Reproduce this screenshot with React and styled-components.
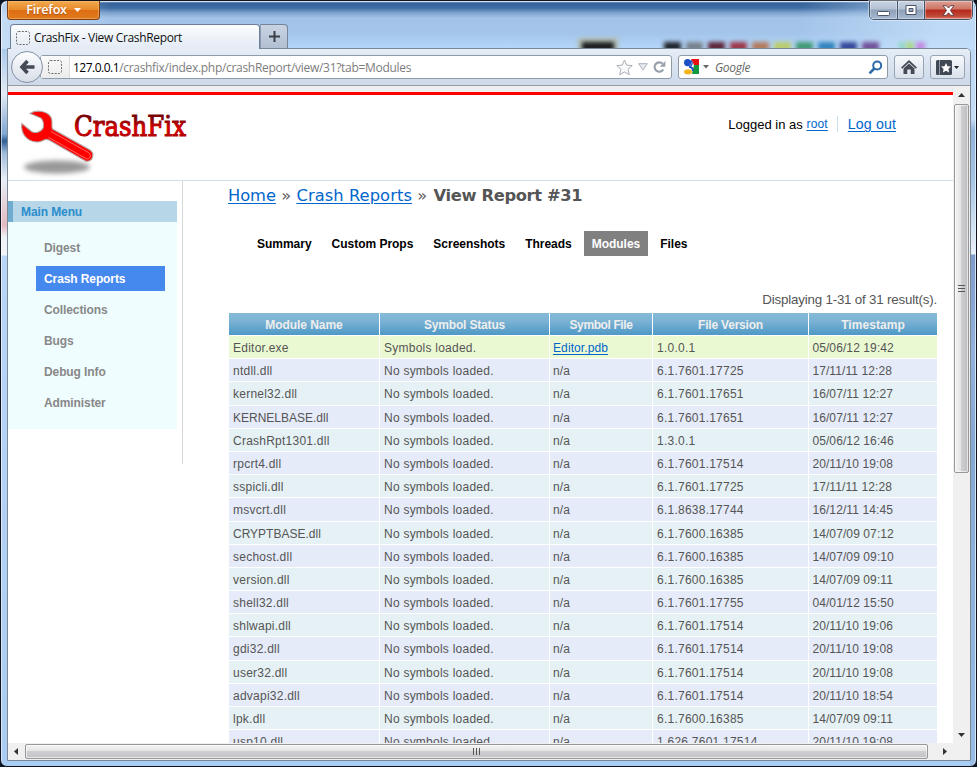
import React from "react";
import styled, { createGlobalStyle, css } from "styled-components";

const ui = `"Open Sans", "Noto Sans", sans-serif`;
const arial = `"Liberation Sans", Arial, sans-serif`;
const verdana = `"DejaVu Sans", Verdana, sans-serif`;

const GlobalStyle = createGlobalStyle`
  * { box-sizing: border-box; }
  html, body { margin: 0; padding: 0; overflow: hidden; background: #0b1424; }
  body { font-family: ${arial}; color: #555; }
  svg { display: block; flex: none; overflow: visible; }
`;

const Frame = styled.div`
  width: 977px;
  height: 767px;
  display: flex;
  flex-direction: column;
  padding: 0 5px 5px 6px;
  border: 1px solid #10141f;
  border-radius: 7px;
  box-shadow: inset 1px 1px 0 rgba(255, 255, 255, 0.55), inset -1px 0 0 rgba(225, 245, 255, 0.8);
  background:
    linear-gradient(#a9c9ea, #e4ebf4 45px, #7fa7d3 85px, #2f5f93 92px, #9fbbdb 104px, #e8eef6 130px, #e3b9c0 176px, #eef1f7 188px, #f1f3f8 206px, #b9d6f8 207px, #a9cbf1 100%) 0 48px / 7px 100% no-repeat,
    linear-gradient(#bcd8f5, #c6dcf5 70px, #91b2d9 82px, #a7c4e4 130px, #e6eef7 200px, #edf2f8 205px, #7e9bca 206px, #93b1dc 300px, #86a9d4 400px, #9cc0e8 100%) 100% 48px / 6px 100% no-repeat,
    linear-gradient(90deg, rgba(200, 222, 245, 0.9), rgba(190, 215, 243, 0) 110px, rgba(0, 0, 0, 0) 800px, rgba(200, 225, 250, 0.75) 940px) 0 0 / 100% 48px no-repeat,
    linear-gradient(#cfe0f2 0, #34629a 2px, #3f6ca3 7px, #7fa4cf 12px, #a3c3e7 17px, #a4c5ea 32px, #b3d5f8 46px) 0 0 / 100% 48px no-repeat,
    #a9cdf3;
`;

const TitleBar = styled.div`
  height: 23px;
  flex: none;
  display: flex;
  justify-content: space-between;
  align-items: flex-start;
  margin-right: -2px;
`;

const FirefoxButton = styled.div`
  width: 93px;
  height: 19px;
  display: flex;
  align-items: center;
  justify-content: center;
  gap: 7px;
  padding-bottom: 1px;
  color: #fff;
  font: 600 12.5px ${ui};
  letter-spacing: -0.15px;
  text-shadow: 0 1px 1px rgba(120, 50, 0, 0.5);
  border: 1px solid #7c3f16;
  border-top: 0;
  border-radius: 0 0 4px 4px;
  background: linear-gradient(#f1aa4f, #e88a2b 48%, #dd6d12 52%, #e17a1e);
  box-shadow: inset 0 0 0 1px rgba(255, 200, 130, 0.45);
`;

const WindowControls = styled.div`
  display: flex;
  width: 104px;
  height: 19px;
  border: 1px solid #40536b;
  border-top: 0;
  border-radius: 0 0 5px 5px;
  overflow: hidden;
  box-shadow: 0 0 0 1px rgba(255, 255, 255, 0.4);
`;

const ControlButton = styled.div`
  width: ${(p) => p.$w}px;
  display: flex;
  align-items: center;
  justify-content: center;
  border-right: ${(p) => (p.$close ? 0 : "1px solid #40536b")};
  background: ${(p) =>
    p.$close
      ? "linear-gradient(#dba093, #cf7464 45%, #b5281c 50%, #c14a38 85%, #dc8672)"
      : "linear-gradient(#c9d4e2, #b3c1d3 45%, #8fa1b8 50%, #a6b8cf)"};
  box-shadow: inset 0 0 0 1px rgba(255, 255, 255, 0.35);
`;

const TabStrip = styled.div`
  height: 24px;
  flex: none;
  display: flex;
  align-items: flex-start;
  padding-left: 3px;
`;

const Tab = styled.div`
  position: relative;
  z-index: 1;
  width: 250px;
  height: 25px;
  display: flex;
  align-items: center;
  gap: 4px;
  padding: 1px 0 0 5px;
  font: 12px ${ui};
  letter-spacing: -0.34px;
  color: #111;
  border: 1px solid #6d7f97;
  border-bottom: 0;
  border-radius: 4px 4px 0 0;
  background: linear-gradient(#fcfdfe, #eef3f9 50%, #e4ebf5);
`;

const NewTab = styled.div`
  width: 28px;
  height: 24px;
  display: flex;
  align-items: center;
  justify-content: center;
  border: 1px solid #73849b;
  border-left-color: #8d9cb2;
  border-bottom: 0;
  border-radius: 0 4px 0 0;
  background: linear-gradient(#c9d3e2, #b2bfd2);
`;

const BehindGlass = styled.div`
  flex: 1;
  height: 24px;
  overflow: hidden;
  display: flex;
  align-items: flex-end;
  padding-left: 294px;
`;

const Blob = styled.div`
  width: ${(p) => p.$w}px;
  height: 9px;
  margin: 0 ${(p) => p.$gap}px -3px ${(p) => p.$lead || 0}px;
  background: ${(p) => p.$color};
  filter: blur(2px);
  ${(p) => p.$halo && css`box-shadow: 0 0 0 4px #b4bcae;`}
`;

const Browser = styled.div`
  flex: 1;
  min-height: 0;
  display: flex;
  flex-direction: column;
  border: 1px solid #7a8896;
  border-radius: 0 5px 0 0;
  background: #fff;
  overflow: hidden;
`;

const NavBar = styled.div`
  height: 37px;
  flex: none;
  display: flex;
  align-items: center;
  padding-left: 3px;
  border-bottom: 1px solid #989da5;
  background: linear-gradient(#e6edf6, #d9e3f0 45%, #cdd9e9);
`;

const BackButton = styled.div`
  position: relative;
  z-index: 1;
  flex: none;
  width: 32px;
  height: 32px;
  margin-right: -3px;
  display: flex;
  align-items: center;
  justify-content: center;
  border: 1px solid #8390a4;
  border-radius: 50%;
  background: linear-gradient(#fdfdfe, #e9edf3 50%, #d9dfe8);
`;

const Field = styled.div`
  flex: none;
  display: flex;
  align-items: center;
  height: 24px;
  width: ${(p) => p.$w}px;
  margin-right: ${(p) => p.$gap}px;
  padding-right: ${(p) => p.$pad}px;
  font: ${(p) => (p.$italic ? "italic " : "")}12px ${ui};
  border: 1px solid #8f9aa9;
  border-radius: 3px;
  background: #fff;
  color: #7d7d7d;
`;

const Identity = styled.div`
  width: 29px;
  height: 22px;
  display: flex;
  align-items: center;
  padding-left: 7px;
  border-right: 1px solid #dcdcdc;
  background: linear-gradient(#fafafa, #ececec);
`;

const Url = styled.div`
  flex: 1;
  padding-left: 3px;
  letter-spacing: -0.3px;
  white-space: nowrap;
`;

const Host = styled.span`
  color: #000;
  letter-spacing: -0.5px;
`;

const SearchHint = styled.div`
  flex: 1;
  padding-left: 5px;
  letter-spacing: -0.3px;
  color: #666;
`;

const FieldIcons = styled.div`
  display: flex;
  align-items: center;
  gap: 5px;
`;

const ToolButton = styled.div`
  flex: none;
  width: ${(p) => p.$w}px;
  height: 24px;
  margin-right: 6px;
  display: flex;
  align-items: center;
  justify-content: center;
  gap: 2px;
  border: 1px solid #98a4b6;
  border-radius: 3px;
  background: linear-gradient(#f7f9fb, #e8edf4 50%, #d9e1eb);
`;

const Viewport = styled.div`
  flex: 1;
  min-height: 0;
  display: grid;
  grid-template-columns: minmax(0, 1fr) 17px;
  grid-template-rows: minmax(0, 1fr) 17px;
`;

const Page = styled.div`
  overflow: hidden;
  background: #fff;
  border-top: 6px solid #eeeff0;
`;

const PageHeader = styled.div`
  height: 89px;
  display: flex;
  justify-content: space-between;
  align-items: flex-start;
  border-top: 3px solid #f00;
  border-bottom: 1px solid #c9e0ed;
`;

const Account = styled.div`
  display: flex;
  align-items: center;
  padding: 20px 57px 0 0;
  height: 38px;
  color: #000;
  font-size: 13px;
  letter-spacing: 0.02px;
  white-space: pre;
`;

const Link = styled.span`
  color: #06c;
  text-decoration: underline;
  text-underline-offset: 2px;
  text-decoration-thickness: 1px;
  font-size: ${(p) => p.$size || "inherit"};
  letter-spacing: ${(p) => p.$ls || "inherit"};
`;

const Divider = styled.div`
  width: 1px;
  height: 16px;
  margin: 0 10px 0 9px;
  background: #c9e0ed;
`;

const Columns = styled.div`
  display: flex;
  align-items: flex-start;
`;

const Sidebar = styled.div`
  width: 175px;
  height: 283px;
  flex: none;
  padding: 20px 5px 0 0;
  border-right: 1px solid #d6d6d6;
`;

const MenuTitle = styled.div`
  height: 21px;
  padding-left: 8px;
  border-left: 5px solid #6faccf;
  background: #b7d6e7;
  color: #298dcd;
  font: bold 12px/23px ${arial};
  letter-spacing: -0.1px;
`;

const Menu = styled.div`
  height: 207px;
  display: flex;
  flex-direction: column;
  gap: 6px;
  padding: 13px 12px 0 28px;
  background: #effdff;
`;

const MenuItem = styled.div`
  height: 25px;
  padding-left: 8px;
  font: bold 12px/27px ${arial};
  letter-spacing: -0.1px;
  color: ${(p) => (p.$active ? "#fff" : "#888")};
  background: ${(p) => (p.$active ? "#4588ee" : "transparent")};
`;

const Content = styled.div`
  width: 708px;
  margin-left: 46px;
`;

const Breadcrumbs = styled.div`
  height: 50px;
  margin-left: -1px;
  font: 16.3px/29px ${verdana};
  letter-spacing: 0.08px;
  white-space: nowrap;
`;

const Current = styled.b`
  margin-left: 1px;
  letter-spacing: -0.34px;
`;

const Tabs = styled.div`
  height: 25px;
  display: flex;
  gap: 4px;
  padding-left: 20px;
`;

const PageTab = styled.div`
  height: 25px;
  padding: 0 8px;
  font: bold 12px/27px ${arial};
  letter-spacing: -0.02px;
  color: ${(p) => (p.$active ? "#fff" : "#000")};
  background: ${(p) => (p.$active ? "#808080" : "transparent")};
`;

const ResultCount = styled.div`
  height: 57px;
  padding-top: 36px;
  text-align: right;
  font-size: 13.33px;
  line-height: 15px;
  letter-spacing: -0.19px;
`;

const Grid = styled.div`
  display: flex;
  flex-direction: column;
  gap: 1px;
`;

const cols = css`
  display: grid;
  grid-template-columns: 150px 169px 102px 155px 128px;
  column-gap: 1px;
`;

const HeadRow = styled.div`
  ${cols}
  grid-template-rows: 22px;
`;

const HeadCell = styled.div`
  text-align: center;
  color: #eee;
  font: bold 12px/24px ${arial};
  letter-spacing: ${(p) => p.$ls}px;
  background: linear-gradient(#85b9d8, #7cb3d4 35%, #4e99c6);
`;

const Row = styled.div`
  ${cols}
  grid-template-rows: 22.2px;
`;

const Cell = styled.div`
  min-height: 0;
  padding-left: ${(p) => p.$pad || 4}px;
  font: 12px/24px ${arial};
  letter-spacing: ${(p) => p.$ls ?? 0.24}px;
  white-space: nowrap;
  background: ${(p) => p.$bg};
`;

const ScrollTrack = styled.div`
  display: flex;
  flex-direction: ${(p) => (p.$vertical ? "column" : "row")};
  justify-content: space-between;
  background: #f0f0f0;
`;

const ScrollStart = styled.div`
  display: flex;
  flex-direction: inherit;
`;

const ScrollButton = styled.div`
  width: 17px;
  height: 17px;
  flex: none;
  display: flex;
  align-items: center;
  justify-content: center;
`;

const ScrollThumb = styled.div`
  display: flex;
  align-items: center;
  justify-content: center;
  border: 1px solid #979797;
  border-radius: 2px;
  box-shadow: inset 0 0 0 1px rgba(255, 255, 255, 0.6);
  ${(p) =>
    p.$vertical
      ? css`width: 15px; height: 369px; margin: 1px 0 0 1px; background: linear-gradient(90deg, #f4f4f4, #e4e4e6 45%, #cfcfd2 50%, #bdbdc1);`
      : css`width: 903px; height: 15px; margin-top: 1px; background: linear-gradient(#f4f4f4, #e4e4e6 45%, #cfcfd2 50%, #c3c3c8);`}
`;

const GoogleMark = styled.svg`
  margin-left: 4px;
`;

const Placeholder = () => (
  <svg width="14" height="14" viewBox="0 0 14 14">
    <rect x="0.5" y="0.5" width="13" height="13" rx="2" fill="none" stroke="#6b6b6b" strokeDasharray="2 1.3" />
  </svg>
);

const Triangle = ({ w, h, d, fill }) => (
  <svg width={w} height={h}><path d={d} fill={fill} /></svg>
);

const Logo = () => (
  <svg width="190" height="84" viewBox="8 95 190 84">
    <defs>
      <filter id="soft" x="-30%" y="-80%" width="160%" height="260%"><feGaussianBlur stdDeviation="2.4" /></filter>
      <linearGradient id="word" x1="0" y1="0" x2="0" y2="1">
        <stop offset="0.25" stopColor="#7c0000" />
        <stop offset="0.55" stopColor="#d80000" />
        <stop offset="0.85" stopColor="#a80000" />
      </linearGradient>
    </defs>
    <ellipse cx="57" cy="167" rx="33" ry="6.5" fill="#999" filter="url(#soft)" />
    <path d="M30 113.5C36 109.5 48 110.5 51.3 118C53 122 51 126 52.5 129L90 150C95.5 154 92.5 162 86 161.3L49 140C45.5 137.5 42.5 142 37 142C27 141.5 20.5 134 21.8 123.5L31.5 131.5C35 134 42 131.5 43.3 127.5C44 121 42.5 118 38.5 117Z" fill="#f00" stroke="#b3a3a3" strokeWidth="1.1" />
    <path d="M51 131.5L88.5 152.5C92 155.5 90 159.5 86.5 158.8L48.5 137.4" fill="none" stroke="#ff8f8f" strokeWidth="0.7" />
    <text x="74" y="136.3" fontFamily="DejaVu Serif" fontSize="28" textLength="112" lengthAdjust="spacingAndGlyphs" fill="url(#word)" stroke="url(#word)" strokeWidth="1.1">CrashFix</text>
  </svg>
);

const MENU = ["Digest", "Crash Reports", "Collections", "Bugs", "Debug Info", "Administer"];
const TABS = ["Summary", "Custom Props", "Screenshots", "Threads", "Modules", "Files"];
const HEADS = [
  ["Module Name", -0.05],
  ["Symbol Status", -0.17],
  ["Symbol File", -0.4],
  ["File Version", -0.2],
  ["Timestamp", 0.05],
];
const MODULES = [
  ["Editor.exe", "1.0.0.1", "05/06/12 19:42", "Editor.pdb"],
  ["ntdll.dll", "6.1.7601.17725", "17/11/11 12:28"],
  ["kernel32.dll", "6.1.7601.17651", "16/07/11 12:27"],
  ["KERNELBASE.dll", "6.1.7601.17651", "16/07/11 12:27"],
  ["CrashRpt1301.dll", "1.3.0.1", "05/06/12 16:46"],
  ["rpcrt4.dll", "6.1.7601.17514", "20/11/10 19:08"],
  ["sspicli.dll", "6.1.7601.17725", "17/11/11 12:28"],
  ["msvcrt.dll", "6.1.8638.17744", "16/12/11 14:45"],
  ["CRYPTBASE.dll", "6.1.7600.16385", "14/07/09 07:12"],
  ["sechost.dll", "6.1.7600.16385", "14/07/09 09:10"],
  ["version.dll", "6.1.7600.16385", "14/07/09 09:11"],
  ["shell32.dll", "6.1.7601.17755", "04/01/12 15:50"],
  ["shlwapi.dll", "6.1.7601.17514", "20/11/10 19:06"],
  ["gdi32.dll", "6.1.7601.17514", "20/11/10 19:08"],
  ["user32.dll", "6.1.7601.17514", "20/11/10 19:08"],
  ["advapi32.dll", "6.1.7601.17514", "20/11/10 18:54"],
  ["lpk.dll", "6.1.7600.16385", "14/07/09 09:11"],
  ["usp10.dll", "1.626.7601.17514", "20/11/10 19:08"],
];

const SWATCHES = ["#20242c", "#77808c", "#5d2438", "#9c3648", "#b27a5c", "#b9cc6a", "#3f9a76", "#2f83bd", "#34479a", "#71509a"];

const rowColor = (i, pdb) => (pdb ? "#ebf9d3" : i % 2 ? "#e5ebf9" : "#e5f1f4");
const nameSpacing = (name) => (/[A-Z]{3}/.test(name) ? 0 : 0.24);

export default function App() {
  return (
    <>
      <GlobalStyle />
      <Frame>
        <TitleBar>
          <FirefoxButton>
            Firefox
            <Triangle w={7} h={4} d="M0 0H7L3.5 4Z" fill="#fff" />
          </FirefoxButton>
          <WindowControls>
            <ControlButton $w={28}>
              <svg width="13" height="15"><rect x="0.5" y="8.5" width="12" height="4" rx="1" fill="#fff" stroke="#4b5567" /></svg>
            </ControlButton>
            <ControlButton $w={27}>
              <svg width="12" height="10"><path d="M1 .5H11V9.5H1ZM4 3.5V6.5H8V3.5Z" fill="#fff" fillRule="evenodd" stroke="#4b5567" /></svg>
            </ControlButton>
            <ControlButton $w={47} $close>
              <svg width="13" height="11" viewBox="0 0 13 11"><path d="M1 .7H4.3L6.5 3L8.7 .7H12L8.4 5.4L12 10.3H8.7L6.5 7.8L4.3 10.3H1L4.6 5.4Z" fill="#fff" stroke="#5b3b40" strokeWidth="0.9" /></svg>
            </ControlButton>
          </WindowControls>
        </TitleBar>
        <TabStrip>
          <Tab><Placeholder />CrashFix - View CrashReport</Tab>
          <NewTab>
            <svg width="11" height="11"><path d="M5.5 0V11M0 5.5H11" stroke="#3b4046" strokeWidth="2" /></svg>
          </NewTab>
          <BehindGlass>
            <Blob $w={32} $gap={50} $color="#1b1d20" $halo />
            {SWATCHES.map((c) => <Blob key={c} $w={17} $gap={5} $color={c} />)}
            <Blob $w={6} $gap={1} $lead={15} $color="#8fd6c4" />
            <Blob $w={8} $gap={2} $color="#a9d889" />
            <Blob $w={9} $gap={0} $color="#c38ae0" />
          </BehindGlass>
        </TabStrip>
        <Browser>
          <NavBar>
            <BackButton>
              <svg width="16" height="16" viewBox="0 0 16 16"><path d="M8.5 2L3 8L8.5 14M3.5 8H15.5" fill="none" stroke="#454b54" strokeWidth="3.6" /></svg>
            </BackButton>
            <Field $w={632} $gap={6} $pad={5}>
              <Identity><Placeholder /></Identity>
              <Url><Host>127.0.0.1</Host>/crashfix/index.php/crashReport/view/31?tab=Modules</Url>
              <FieldIcons>
                <svg width="17" height="17" viewBox="0 0 17 17"><path d="M8.5 1L10.7 6.1L16.2 6.6L12 10.3L13.3 15.8L8.5 12.9L3.7 15.8L5 10.3L.8 6.6L6.3 6.1Z" fill="#fafafa" stroke="#a9afb6" /></svg>
                <svg width="10" height="8"><path d="M.7 .7H9.3L5 7Z" fill="#e9ecf1" stroke="#a9b1bd" /></svg>
                <svg width="13" height="14" viewBox="0 0 13 14"><path d="M10.3 9.5A4.7 4.7 0 1 1 9.5 3.6" fill="none" stroke="#99a1ac" strokeWidth="2.2" /><path d="M12.3 1V6.8H6.8Z" fill="#99a1ac" /></svg>
              </FieldIcons>
            </Field>
            <Field $w={210} $gap={6} $pad={4} $italic>
              <GoogleMark width="17" height="18" viewBox="0 0 17 18">
                <path d="M8 1H16V7H11Z" fill="#e81010" />
                <path d="M11 7H16V16H9Z" fill="#109a3c" />
                <ellipse cx="4.6" cy="4.6" rx="3.6" ry="3.7" fill="#1c4fc4" />
                <path d="M6 8.5C9.5 9.5 10.5 11 9.5 13" fill="none" stroke="#1c4fc4" strokeWidth="2" />
                <ellipse cx="5" cy="13.8" rx="4" ry="2.6" fill="#f3b51d" />
                <path d="M8 2.5C10 5 9 7 7.5 8" fill="none" stroke="#1c4fc4" strokeWidth="1.3" />
              </GoogleMark>
              <svg width="10" height="4"><path d="M3 0H9L6 3.5Z" fill="#666" /></svg>
              <SearchHint>Google</SearchHint>
              <svg width="15" height="15" viewBox="0 0 15 15"><circle cx="9.2" cy="5.5" r="4" fill="none" stroke="#2d6aa8" strokeWidth="2" /><path d="M6.3 8.5L1.5 13.3" stroke="#2d6aa8" strokeWidth="2.6" /></svg>
            </Field>
            <ToolButton $w={30}>
              <svg width="16" height="14" viewBox="0 0 16 14"><path d="M8 0L16 7.5L14.8 8.7L8 2.5L1.2 8.7L0 7.5Z" fill="#454b54" /><path d="M8 3.6L13.5 8.5V14H9.7V9.5H6.3V14H2.5V8.5Z" fill="#454b54" /></svg>
            </ToolButton>
            <ToolButton $w={35}>
              <svg width="16" height="15" viewBox="0 0 16 15"><rect width="16" height="15" rx="1.5" fill="#3f4854" /><path d="M3.5 0V15" stroke="#8f98a5" /><path d="M10 3L11.5 6.2L15 6.6L12.4 9L13.1 12.4L10 10.7L6.9 12.4L7.6 9L5 6.6L8.5 6.2Z" fill="#fff" /></svg>
              <Triangle w={5} h={3} d="M0 0H5L2.5 3Z" fill="#222" />
            </ToolButton>
          </NavBar>
          <Viewport>
            <Page>
              <PageHeader>
                <Logo />
                <Account>
                  Logged in as <Link $size="12px" $ls="0.15px">root</Link>
                  <Divider />
                  <Link $size="14.2px" $ls="0.12px">Log out</Link>
                </Account>
              </PageHeader>
              <Columns>
                <Sidebar>
                  <MenuTitle>Main Menu</MenuTitle>
                  <Menu>
                    {MENU.map((m) => <MenuItem key={m} $active={m === "Crash Reports"}>{m}</MenuItem>)}
                  </Menu>
                </Sidebar>
                <Content>
                  <Breadcrumbs>
                    <Link $ls="-0.05px">Home</Link> » <Link>Crash Reports</Link> » <Current>View Report #31</Current>
                  </Breadcrumbs>
                  <Tabs>
                    {TABS.map((t) => <PageTab key={t} $active={t === "Modules"}>{t}</PageTab>)}
                  </Tabs>
                  <ResultCount>Displaying 1-31 of 31 result(s).</ResultCount>
                  <Grid>
                    <HeadRow>{HEADS.map(([h, ls]) => <HeadCell key={h} $ls={ls}>{h}</HeadCell>)}</HeadRow>
                    {MODULES.map(([name, version, time, pdb], i) => {
                      const bg = rowColor(i, pdb);
                      return (
                        <Row key={name}>
                          <Cell $bg={bg} $ls={nameSpacing(name)}>{name}</Cell>
                          <Cell $bg={bg}>{pdb ? "Symbols loaded." : "No symbols loaded."}</Cell>
                          <Cell $bg={bg} $pad={3} $ls={0.1}>{pdb ? <Link>{pdb}</Link> : "n/a"}</Cell>
                          <Cell $bg={bg}>{version}</Cell>
                          <Cell $bg={bg} $pad={3.4} $ls={0.1}>{time}</Cell>
                        </Row>
                      );
                    })}
                  </Grid>
                </Content>
              </Columns>
            </Page>
            <ScrollTrack $vertical>
              <ScrollStart>
                <ScrollButton><Triangle w={7} h={4} d="M0 4H7L3.5 0Z" fill="#333" /></ScrollButton>
                <ScrollThumb $vertical>
                  <svg width="7" height="8"><path d="M0 .5H7M0 3.5H7M0 6.5H7" stroke="#555" /></svg>
                </ScrollThumb>
              </ScrollStart>
              <ScrollButton><Triangle w={7} h={4} d="M0 0H7L3.5 4Z" fill="#333" /></ScrollButton>
            </ScrollTrack>
            <ScrollTrack>
              <ScrollStart>
                <ScrollButton><Triangle w={6} h={7} d="M4 0V7L0 3.5Z" fill="#333" /></ScrollButton>
                <ScrollThumb>
                  <svg width="8" height="7"><path d="M.5 0V7M3.5 0V7M6.5 0V7" stroke="#555" /></svg>
                </ScrollThumb>
              </ScrollStart>
              <ScrollButton><Triangle w={4} h={7} d="M0 0V7L4 3.5Z" fill="#333" /></ScrollButton>
            </ScrollTrack>
            <ScrollTrack />
          </Viewport>
        </Browser>
      </Frame>
    </>
  );
}
